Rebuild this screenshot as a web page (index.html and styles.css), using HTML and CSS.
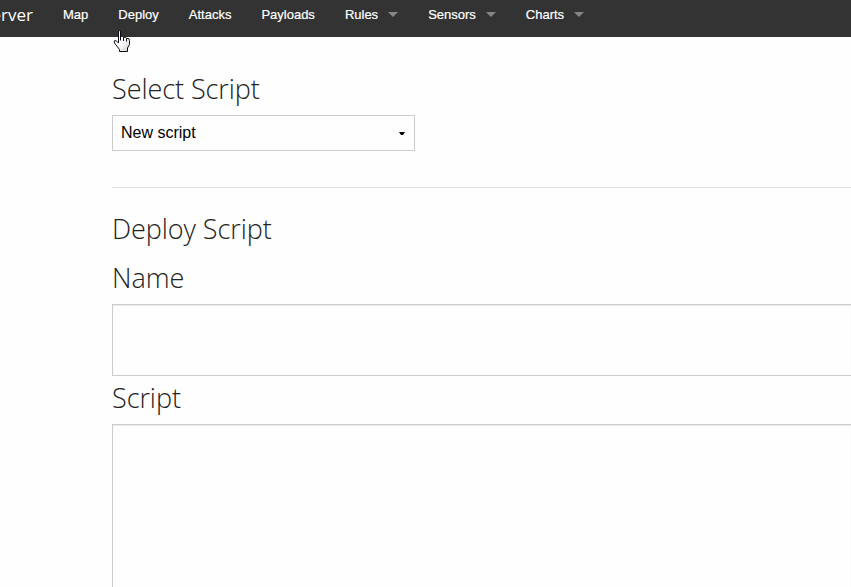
FILE: index.html
```html
<!DOCTYPE html>
<html lang="en">
<head>
<meta charset="utf-8">
<title>Deploy</title>
<link rel="stylesheet" href="styles.css">
</head>
<body>
<nav class="top-bar">
  <div class="brand"><span>erver</span></div>
  <ul class="menu">
    <li>Map</li>
    <li>Deploy</li>
    <li>Attacks</li>
    <li>Payloads</li>
    <li class="dropdown">Rules</li>
    <li class="dropdown">Sensors</li>
    <li class="dropdown">Charts</li>
  </ul>
</nav>
<main class="content">
  <h3>Select Script</h3>
  <div class="select"><span>New script</span>
    <svg width="6" height="3" viewBox="0 0 6 3"><path d="M0 0h6L4 3H2z"/></svg>
  </div>
  <hr>
  <h3 class="deploy-title">Deploy Script</h3>
  <h3 class="name-title">Name</h3>
  <input class="field name-field" type="text" aria-label="Name">
  <h3 class="script-title">Script</h3>
  <textarea class="field script-field" aria-label="Script"></textarea>
</main>
<svg class="cursor" width="18" height="22" viewBox="0 0 18 22">
  <defs><linearGradient id="hand" x1="0" y1="0" x2="1" y2="1"><stop offset=".5" stop-color="#fff"/><stop offset="1" stop-color="#ccc"/></linearGradient></defs>
  <path d="M5.5 13V2Q5.5.5 6.500.5T7.500 2V6.500Q10 5.500 10.500 7.500Q13 6.500 13.500 8.500Q16.500 7.500 16.500 10.500V14.500L14.500 18V21.500H6.500V19.500L1.500 13Q.5 10.500 2 10.500T5.500 13Z" fill="url(#hand)" stroke="#0b0b18"/>
  <path d="M7.500 6V10.500M10.500 7.500V11M13.500 8.500V11.500" fill="none" stroke="#0b0b18"/>
</svg>
</body>
</html>
```
FILE: styles.css
```css
* {
  box-sizing: border-box;
}

body {
  margin: 0;
  height: 587px;
  overflow: hidden;
  background: #fefefe;
  font-family: "Liberation Sans", Arial, sans-serif;
}

.top-bar {
  display: flex;
  height: 37px;
  background: #333;
  color: #fff;
  line-height: 29px;
}

.brand {
  display: flex;
  justify-content: flex-end;
  width: 48px;
  padding-right: 15px;
  font-family: "Open Sans", sans-serif;
  font-size: 17px;
}

.menu {
  display: flex;
  margin: 0;
  padding: 0;
  list-style: none;
  font-size: 13px;
  -webkit-text-stroke: 0.2px #fff;
}

.menu li {
  padding: 0 15px;
}

.menu .dropdown {
  display: flex;
  align-items: flex-start;
}

.dropdown::after {
  content: "";
  margin: 12px 0 0 10px;
  border: 5px solid transparent;
  border-top-color: #858585;
  border-bottom: 0;
}

.content {
  padding: 33px 0 0 112px;
}

h3 {
  height: 38px;
  margin: 0;
  color: #222;
  font-family: "Open Sans", sans-serif;
  font-size: 27px;
  font-weight: 300;
  letter-spacing: -0.07px;
  line-height: 38px;
}

.select {
  display: flex;
  align-items: center;
  justify-content: space-between;
  width: 303px;
  height: 36px;
  margin-top: 7px;
  padding: 0 9px 0 8px;
  border: 1px solid #ccc;
  background: #fefefe;
  color: #000;
  font-size: 16px;
}

hr {
  height: 1px;
  margin: 36px 0 22px;
  border: 0;
  background: #ddd;
}

.name-title {
  margin-top: 11px;
}

.script-title {
  margin-top: 3px;
}

.field {
  display: block;
  width: 100%;
  border: 1px solid #ccc;
  border-right: 0;
  border-radius: 0;
  background: #fefefe;
  box-shadow: inset 0 1px 1px rgba(0, 0, 0, 0.08);
  resize: none;
}

.name-field {
  height: 72px;
  margin-top: 7px;
}

.script-field {
  height: 163px;
  margin-top: 7px;
  border-bottom: 0;
}

.cursor {
  position: absolute;
  top: 30px;
  left: 113px;
}
```
